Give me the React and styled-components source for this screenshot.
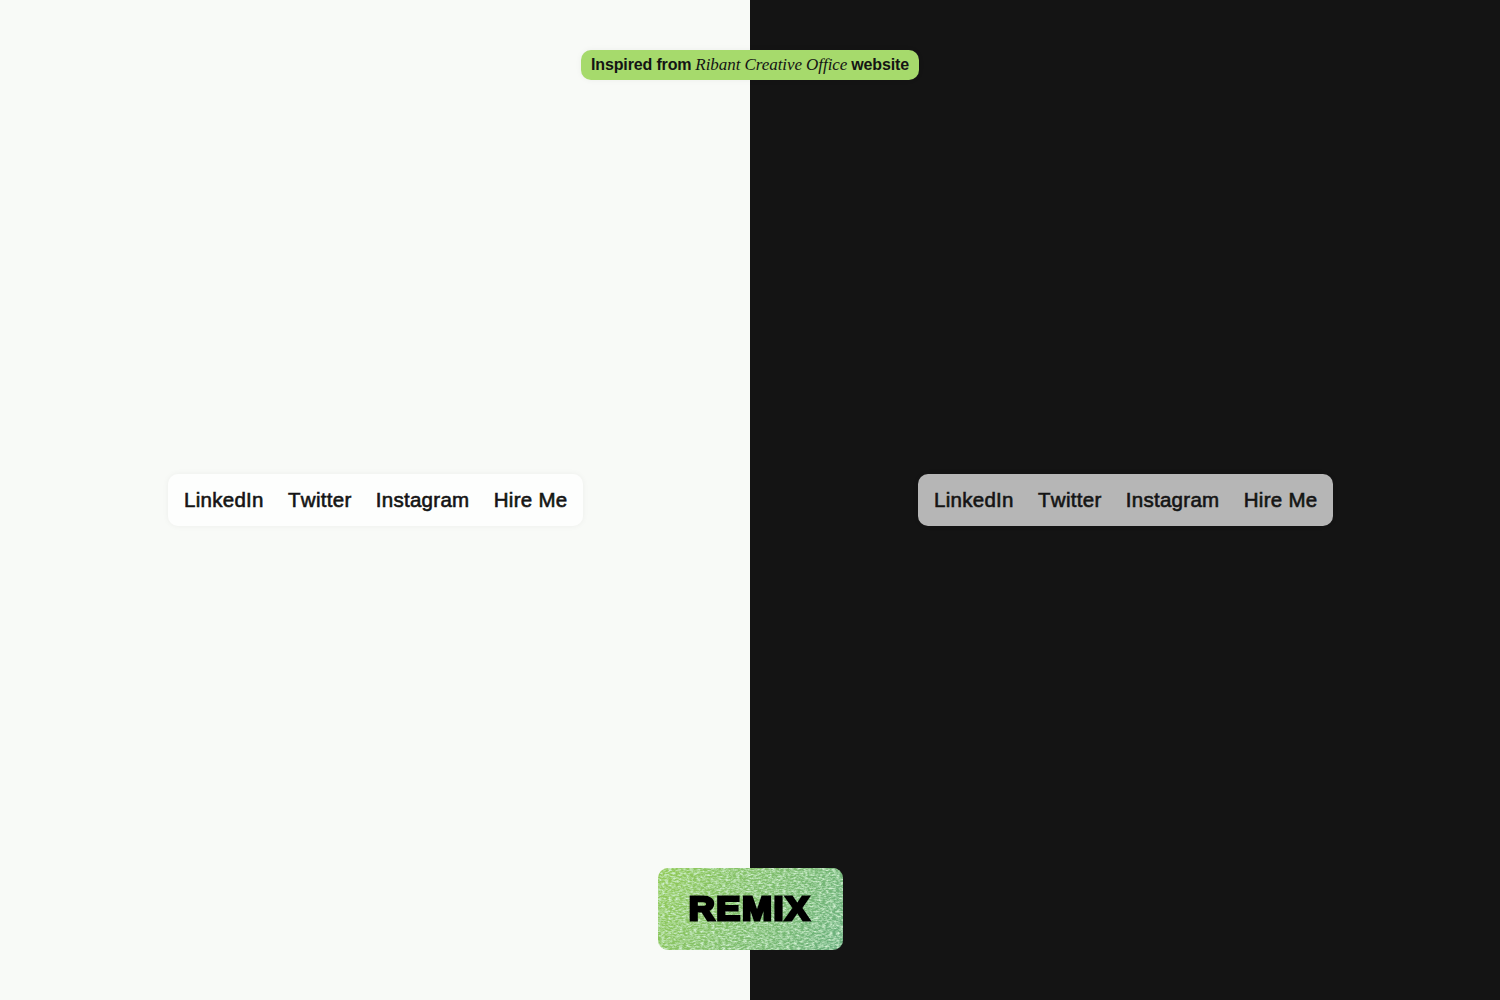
import React from "react";
import styled, { createGlobalStyle } from "styled-components";

const GlobalStyle = createGlobalStyle`
  * { box-sizing: border-box; }
  body {
    margin: 0;
    font-family: "Liberation Sans", Arial, sans-serif;
    color: #141414;
  }
`;

const Page = styled.main`
  position: relative;
  display: grid;
  grid-template-columns: 1fr 1fr;
  height: 100vh;
  overflow: hidden;
`;

const Panel = styled.section`
  display: flex;
  align-items: center;
  justify-content: center;
  background: ${({ $dark }) => ($dark ? "#141414" : "#f8faf7")};
`;

const Nav = styled.nav`
  display: flex;
  align-items: center;
  justify-content: space-between;
  width: 415px;
  height: 52px;
  padding: 0 15px 0 16.5px;
  border-radius: 10px;
  background: rgba(255, 255, 255, 0.69);
  box-shadow: 0 0 6px rgba(0, 0, 0, 0.05);
`;

const NavLink = styled.a`
  font-size: 20.5px;
  line-height: 20px;
  letter-spacing: 0.28px;
  font-kerning: none;
  white-space: nowrap;
  -webkit-text-stroke: 0.6px currentColor;
`;

const Overlay = styled.div`
  position: absolute;
  inset: 0;
  display: flex;
  flex-direction: column;
  align-items: center;
  justify-content: space-between;
  padding: 50px 0;
  pointer-events: none;
`;

const Credit = styled.p`
  display: flex;
  align-items: center;
  justify-content: center;
  gap: 4px;
  width: 338px;
  height: 30px;
  margin: 0;
  border-radius: 10px;
  background: #a6da6c;
  box-shadow: 0 0 6px rgba(0, 0, 0, 0.05);
  font-size: 16px;
  font-weight: 700;
  line-height: 20px;
  letter-spacing: -0.15px;
  white-space: nowrap;
`;

const Studio = styled.em`
  font-family: "Liberation Serif", "Times New Roman", serif;
  font-size: 17px;
  font-weight: 400;
  letter-spacing: -0.06px;
`;

const RemixButton = styled.button`
  display: grid;
  place-items: center;
  width: 185px;
  height: 82px;
  padding: 0;
  border: 0;
  border-radius: 10px;
  overflow: hidden;
  background: linear-gradient(120deg, #94cb58, #6bb080);
  color: #000;
`;

const Grain = styled.svg`
  grid-area: 1 / 1;
  width: 185px;
  height: 82px;
`;

const RemixLabel = styled.span`
  grid-area: 1 / 1;
  z-index: 1;
  font-family: "Liberation Sans", Arial, sans-serif;
  font-size: 33.5px;
  font-weight: 700;
  line-height: 40px;
  letter-spacing: 1.5px;
  -webkit-text-stroke: 2.8px currentColor;
  transform: scaleX(1.075);
`;

const links = ["LinkedIn", "Twitter", "Instagram", "Hire Me"];

function SocialNav() {
  return (
    <Nav>
      {links.map((label) => (
        <NavLink key={label}>{label}</NavLink>
      ))}
    </Nav>
  );
}

export default function App() {
  return (
    <>
      <GlobalStyle />
      <Page>
        <Panel>
          <SocialNav />
        </Panel>
        <Panel $dark>
          <SocialNav />
        </Panel>
        <Overlay>
          <Credit>
            <span>Inspired from</span>
            <Studio>Ribant Creative Office</Studio>
            <span>website</span>
          </Credit>
          <RemixButton>
            <Grain aria-hidden="true">
              <filter id="grain" x="0" y="0" width="100%" height="100%" colorInterpolationFilters="sRGB">
                <feTurbulence type="fractalNoise" baseFrequency="0.28 0.6" numOctaves="3" seed="4" />
                <feColorMatrix values="0 0 0 0 0.82  0 0 0 0 0.94  0 0 0 0 0.82  2.2 0 0 0 -0.78" />
              </filter>
              <rect width="185" height="82" filter="url(#grain)" />
            </Grain>
            <RemixLabel>REMIX</RemixLabel>
          </RemixButton>
        </Overlay>
      </Page>
    </>
  );
}
